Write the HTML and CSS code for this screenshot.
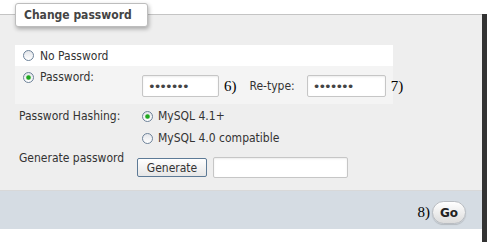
FILE: index.html
```html
<!DOCTYPE html>
<html lang="en">
<head>
  <meta charset="UTF-8" />
  <title>Change password</title>
  <link rel="stylesheet" href="styles.css">
</head>
<body>

  <div class="frame">
    <div class="fieldset">
      <div class="legend">Change password</div>

      <div class="pw-block">
        <div class="row-none"><span class="radio"></span>No Password</div>
        <div class="row-pw">
          <div class="pw-label"><span class="radio checked"></span>Password:</div>
          <div class="pw-inputs">
            <input type="password" class="text pw1" value="secret1">
            <span class="note">6)</span>
            <span class="retype">Re-type:</span>
            <input type="password" class="text pw2" value="secret1">
            <span class="note">7)</span>
          </div>
        </div>
      </div>

      <div class="hash">
        <div class="hash-label">Password Hashing:</div>
        <div class="hash-opts">
          <div class="opt"><span class="radio checked"></span>MySQL 4.1+</div>
          <div class="opt"><span class="radio"></span>MySQL 4.0 compatible</div>
        </div>
      </div>

      <div class="gen">
        <div class="gen-label">Generate password</div>
        <button class="btn-gen">Generate</button>
        <input type="text" class="text gen-out">
      </div>
    </div>

    <!-- footer -->
    <div class="footer">
      <span class="note">8)</span>
      <button class="go">Go</button>
    </div>
  </div>

</body>
</html>
```

FILE: styles.css
```css
body {
  margin: 0;
  background: #fff;
  font-family: "DejaVu Sans Condensed", "DejaVu Sans", sans-serif;
  font-size: 12px;
  color: #333;
}

.frame {
  width: 482px;
  height: 229px;
  background: #fff;
  border-right: 5px solid #333;
  border-bottom: 6px solid #333;
  border-bottom-right-radius: 3px;
}

.fieldset {
  position: relative;
  box-sizing: border-box;
  height: 177px;
  margin-top: 14px;
  padding-top: 30px;
  background: #eee;
  border-top: 1px solid #c4c4c4;
  border-bottom: 1px solid #d8d8d8;
}

.legend {
  position: absolute;
  left: 15px;
  top: -12px;
  width: 123px;
  height: 22px;
  padding-left: 8px;
  line-height: 22px;
  background: #fff;
  border: 1px solid #bdbdbd;
  border-radius: 3px;
  box-shadow: 1px 2px 4px rgba(0,0,0,0.3);
  font-weight: bold;
  color: #444;
}

.pw-block {
  margin-left: 15px;
  width: 378px;
}

.row-none {
  display: flex;
  align-items: center;
  height: 21px;
  padding-left: 8px;
  background: #fff;
}

.row-pw {
  display: flex;
  height: 34px;
  padding: 4px 0 0 8px;
  background: #f4f4f4;
  white-space: nowrap;
}

.pw-label {
  display: flex;
  flex-shrink: 0;
  align-items: center;
  width: 119px;
  height: 14px;
}

.pw-inputs {
  display: flex;
  flex-shrink: 0;
  align-items: center;
  height: 22px;
  margin-top: 5px;
}

.pw-inputs > * {
  flex-shrink: 0;
}

.radio {
  position: relative;
  display: inline-block;
  flex-shrink: 0;
  box-sizing: border-box;
  width: 11px;
  height: 11px;
  margin-right: 6px;
  border: 1px solid #6d8299;
  border-radius: 50%;
  background: linear-gradient(#e4e6ea, #fff);
}

.radio.checked::after {
  content: "";
  position: absolute;
  left: 2px;
  top: 2px;
  width: 5px;
  height: 5px;
  border-radius: 50%;
  background: radial-gradient(#1fa71f 40%, #b5e3b5 90%);
}

.text {
  box-sizing: border-box;
  height: 22px;
  margin: 0;
  padding: 0 5px;
  border: 1px solid #c6c6c6;
  border-radius: 2px;
  background: #fff;
  box-shadow: inset 0 1px 2px rgba(0,0,0,0.08);
  font-family: "DejaVu Sans", sans-serif;
  font-size: 13px;
  color: #444;
  letter-spacing: -2px;
}

.pw1 {
  width: 77px;
}

.pw2 {
  width: 79px;
  margin-left: 12px;
}

.note {
  font-family: "Liberation Serif", serif;
  font-size: 15px;
  color: #000;
}

.pw1 + .note,
.pw2 + .note {
  margin-left: 5px;
}

.retype {
  margin-left: 13px;
}

.hash {
  display: flex;
  margin-top: 1px;
  padding-left: 19px;
}

.hash-label {
  width: 123px;
  line-height: 22px;
}

.opt {
  display: flex;
  align-items: center;
  height: 22px;
}

.opt .radio {
  margin-right: 5px;
}

.gen {
  display: flex;
  align-items: flex-start;
  margin-top: 2px;
  padding-left: 19px;
  height: 27px;
}

.gen-label {
  width: 118px;
  line-height: 14px;
}

.btn-gen {
  box-sizing: border-box;
  width: 70px;
  height: 19px;
  margin-top: 7px;
  padding: 0;
  border: 1px solid #5d7a96;
  border-radius: 2px;
  background: linear-gradient(#fff, #e6e6e6);
  font-family: inherit;
  font-size: 12px;
  color: #333;
}

.gen-out {
  width: 135px;
  height: 21px;
  margin: 6px 0 0 6px;
}

.footer {
  display: flex;
  justify-content: flex-end;
  align-items: center;
  height: 38px;
  padding: 5px 16px 0 0;
  box-sizing: border-box;
  background: #d5dce3;
}

.footer .note {
  margin-right: 2px;
}

.go {
  box-sizing: border-box;
  width: 34px;
  height: 23px;
  padding: 0;
  border: 1px solid #b9bdc2;
  border-radius: 12px;
  background: linear-gradient(#fff, #dcdcdc);
  box-shadow: 0 1px 1px rgba(0,0,0,0.15);
  font-family: "DejaVu Sans", sans-serif;
  font-size: 12px;
  font-weight: bold;
  color: #222;
}
```
